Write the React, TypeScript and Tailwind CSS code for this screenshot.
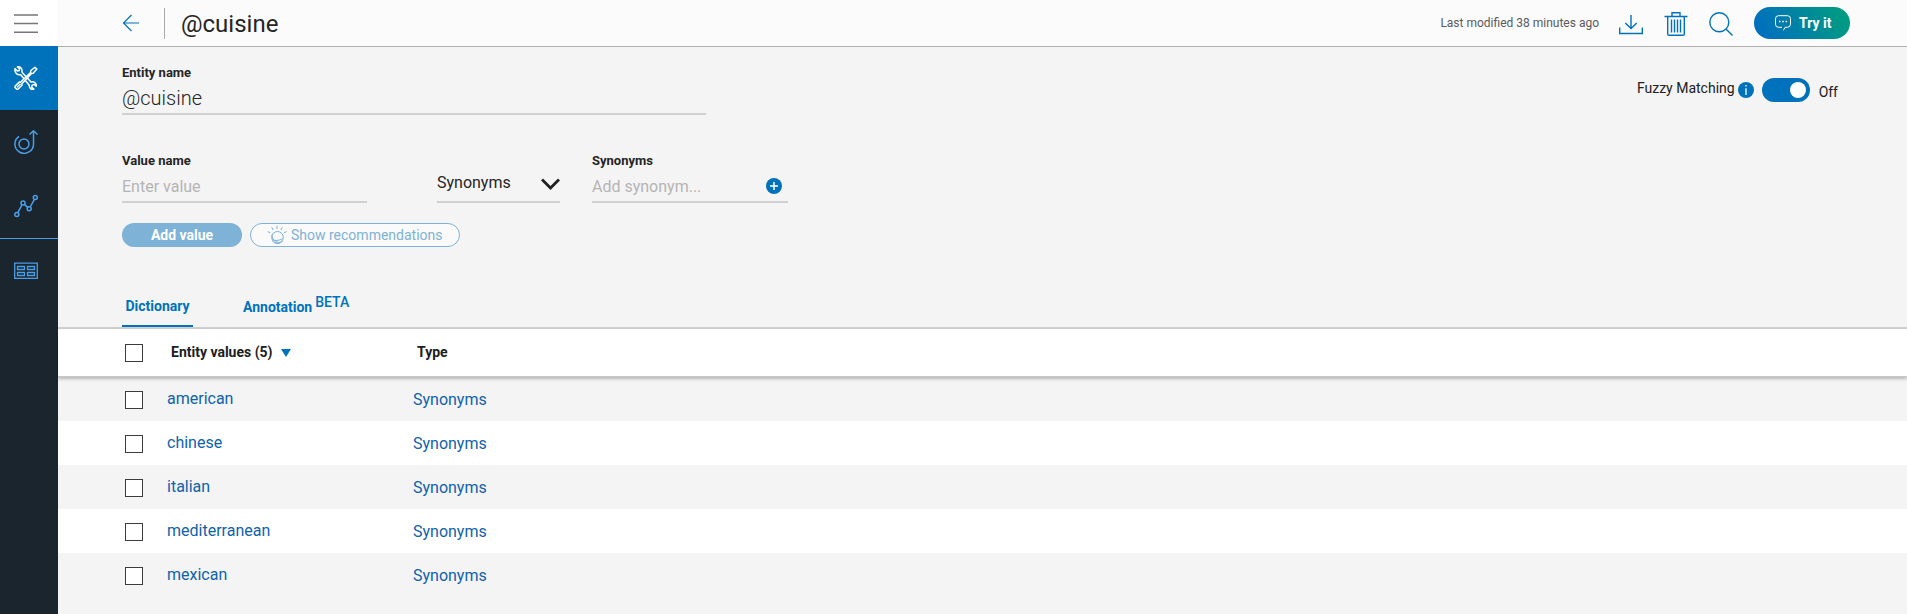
import { useState } from "react";

const entityValues = ["american", "chinese", "italian", "mediterranean", "mexican"];

function ToolsIcon() {
  return (
    <svg className="size-6" viewBox="0 0 24 24" fill="none" stroke="currentColor" strokeWidth="1.5" strokeLinejoin="round">
      <path d="M1 2.6 3.3 5l1.9-.4L5.6 2.6 3.4.9C5.500.3 7.900 1.600 8 4.300v2L17 16c2.800-.8 5.600 1.200 5.300 4.300L20.200 18.500l-2.100.6-.4 2 2.200 2.100c-2.400.8-5-1.200-4.600-4L6.700 8.700C3.300 9.500.300 6.800 1 2.600Z" />
      <path d="m22.800 3-3.600 4.300-1.700.3L7.900 17.700l.2 1.400-3.900 4-1.400.2-1.900-1.900.3-1.400 4-3.900 1.300.2L16.600 6.600l.1-1.800L20.900 1.200Z" fill="#0072bb" />
      <path d="m3 21.200 3.500-3.500" />
    </svg>
  );
}

function IntentIcon() {
  return (
    <svg className="size-6" viewBox="0 0 24 24" fill="none" stroke="currentColor" strokeWidth="1.5">
      <circle cx="10" cy="14" r="5" />
      <path d="M5 6.300A9.300 9.300 0 1 0 19.500 14V1" />
      <path d="m15.500 4.500 4-3.700 4 3.700" />
    </svg>
  );
}

function ChartIcon() {
  return (
    <svg className="size-6" viewBox="0 0 24 24" fill="none" stroke="currentColor" strokeWidth="1.500">
      <circle cx="2.800" cy="20.500" r="2" />
      <circle cx="9" cy="9" r="2" />
      <circle cx="15.200" cy="14.800" r="2" />
      <circle cx="21.300" cy="3.500" r="2" />
      <path d="m3.800 18.700 4.300-8M10.500 10.400l3.200 3M16.200 13l4.200-7.700" />
    </svg>
  );
}

function TableIcon() {
  return (
    <svg className="size-6" viewBox="0 0 24 24" fill="none" stroke="currentColor" strokeWidth="1.300">
      <path d="M.7 4.200h22.600v15.100H.7zM3.500 7.500h7v3h-7zM13.500 7.500h7v3h-7zM3.500 13.500h7v3h-7zM13.500 13.500h7v3h-7z" />
    </svg>
  );
}

function DownloadIcon() {
  return (
    <svg className="size-6" viewBox="0 0 24 24" fill="none" stroke="currentColor" strokeWidth="1.400">
      <path d="M12 3v13.500M6.300 11l5.700 5.500 5.700-5.500M.7 15.500v6h22.600v-6" />
    </svg>
  );
}

function TrashIcon() {
  return (
    <svg className="size-6" viewBox="0 0 24 24" fill="none" stroke="currentColor" strokeWidth="1.400">
      <path d="M.5 4.500h23M8 4.500v-3.700h8v3.700M3.700 4.500v17.500q0 1.300 1.300 1.300h14q1.300 0 1.300-1.300V4.500M7.500 7.500v13M10.500 7.500v13M13.500 7.500v13M16.500 7.500v13" />
    </svg>
  );
}

function SearchIcon() {
  return (
    <svg className="size-6" viewBox="0 0 24 24" fill="none" stroke="currentColor" strokeWidth="1.400">
      <circle cx="10.300" cy="10.300" r="9.500" />
      <path d="m17 17 6.500 6.500" />
    </svg>
  );
}

function ChatIcon() {
  return (
    <svg className="size-4" viewBox="0 0 16 16" fill="none" stroke="currentColor" strokeWidth="1">
      <path d="M8.500 15.300 10 12.300h2.500q3-.3 3-3V3.700q0-3-3-3h-9q-3 0-3 3v5.600q0 3 3 3H7" />
      <path d="M4 6.500h1.500M7.300 6.500h1.500M10.600 6.500h1.500" strokeWidth="1.500" />
    </svg>
  );
}

function WatsonIcon() {
  return (
    <svg className="size-5" viewBox="0 0 20 20" fill="none" stroke="currentColor" strokeWidth="1">
      <circle cx="10.500" cy="12.300" r="5.800" />
      <path d="M5.800 8.600c-1.800 2.400 0 6.600 3.800 8.200 3 1.300 5.500.8 6.200-1" />
      <path d="M5.500 15.500c1.200 2.800 4.800 4 7.800 2.300M5.300 14.500c2 1.600 7.500 1.300 10.300-1" />
      <path d="M10 4V.8M6.200 5 4.700 2.300M13.800 5l1.500-2.700M3.400 8 .6 6.400M16.800 8l2.800-1.600" />
    </svg>
  );
}

const checkboxClass =
  "block size-[18px] appearance-none border border-[#3c3c3c] bg-white checked:bg-[#0072bb]";
const labelClass = "block text-[13px] leading-[18px] font-bold text-[#252525]";
const fieldClass =
  "block w-full border-b-2 border-[#d0d0d0] bg-transparent text-[#252525] outline-none placeholder:text-[#b4b4b4]";

export default function App() {
  const [matching, setMatching] = useState(true);
  return (
    <div className="flex min-h-screen bg-[#f4f4f4] font-[Roboto,'Noto_Sans',sans-serif] text-[#202020]">
      <nav aria-label="Main" className="w-[58px] shrink-0 bg-[#1b252e] text-[#4a9fe8]">
        <button aria-label="Menu" className="flex h-[46px] w-full items-center bg-white pl-3.5 text-[#777]">
          <svg className="size-6" viewBox="0 0 24 24" stroke="currentColor" strokeWidth="1.500">
            <path d="M0 4h24M0 12.500h24M0 21.200h24" />
          </svg>
        </button>
        <a href="#build" aria-label="Build" className="flex h-16 items-center bg-[#0072bb] pl-3.5 text-white">
          <ToolsIcon />
        </a>
        <a href="#improve" aria-label="Improve" className="flex h-16 items-center pl-3.5">
          <IntentIcon />
        </a>
        <a href="#analytics" aria-label="Analytics" className="flex h-16 items-center pl-3.5">
          <ChartIcon />
        </a>
        <a href="#workspaces" aria-label="Workspaces" className="flex h-16 items-center border-t border-[#4a9fe8] pl-3.5">
          <TableIcon />
        </a>
      </nav>

      <div className="min-w-0 flex-1">
        <header className="flex h-[47px] items-center border-b border-[#b0b0b0] bg-[#fbfbfb] pr-[57px] pl-16 text-[#0072bb]">
          <a href="#back" aria-label="Back">
            <svg className="size-[18px]" viewBox="0 0 18 18" fill="none" stroke="currentColor" strokeWidth="1.200">
              <path d="M17 9H1.500M9.500 1 1.500 9l8 8" />
            </svg>
          </a>
          <div className="ml-6 h-[31px] border-l border-[#aaa]" />
          <h1 className="ml-4 pt-0.5 text-2xl text-[#252525]">@cuisine</h1>
          <p className="ml-auto text-xs text-[#5a5a5a]">Last modified 38 minutes ago</p>
          <div className="ml-5 flex items-center gap-[21px] pt-0.5">
            <button aria-label="Download"><DownloadIcon /></button>
            <button aria-label="Delete"><TrashIcon /></button>
            <button aria-label="Search"><SearchIcon /></button>
          </div>
          <button className="ml-[21px] flex h-8 w-24 items-center gap-2 rounded-full bg-linear-[60deg,#0072bb_15%,#009b82_90%] pl-[21px] text-sm font-bold text-white">
            <ChatIcon />
            Try it
          </button>
        </header>

        <main>
          <div className="pt-[17px] pr-[69px] pl-16">
            <div className="flex items-start justify-between">
              <div className="w-[584px]">
                <label htmlFor="entity" className={labelClass}>Entity name</label>
                <input id="entity" defaultValue="@cuisine" className={`${fieldClass} h-[33px] text-xl font-light`} />
              </div>
              <div className="mt-3.5 flex h-6 items-center text-sm">
                <span className="mb-1">Fuzzy Matching</span>
                <button aria-label="About fuzzy matching" className="ml-[3px]">
                  <svg className="size-4" viewBox="0 0 16 16">
                    <circle cx="8" cy="8" r="8" fill="#0072bb" />
                    <path d="M8 3v1.500M8 6.300V13" stroke="white" strokeWidth="1.300" />
                  </svg>
                </button>
                <label className="ml-2 flex items-center">
                  <input
                    type="checkbox"
                    aria-label="Fuzzy matching"
                    checked={matching}
                    onChange={() => setMatching(!matching)}
                    className="flex h-6 w-12 appearance-none items-center justify-start rounded-full bg-[#0072bb] px-1 before:block before:size-4 before:rounded-full before:bg-white checked:justify-end"
                  />
                  <span className="mt-1 ml-[9px]">Off</span>
                </label>
              </div>
            </div>

            <div className="mt-[37px] flex items-end">
              <div className="w-[245px]">
                <label htmlFor="value" className={labelClass}>Value name</label>
                <input id="value" placeholder="Enter value" className={`${fieldClass} h-[33px] pt-0.5 text-base`} />
              </div>
              <div className="relative ml-[70px] w-[123px]">
                <select aria-label="Value type" className={`${fieldClass} h-[42px] appearance-none pt-1 text-base`}>
                  <option>Synonyms</option>
                  <option>Patterns</option>
                </select>
                <svg className="pointer-events-none absolute top-[17px] right-0 h-3 w-[19px]" viewBox="0 0 19 12" fill="none" stroke="#202020" strokeWidth="2.800">
                  <path d="m1 1.500 8.500 8.500L18 1.500" />
                </svg>
              </div>
              <div className="relative ml-8 w-[196px]">
                <label htmlFor="synonym" className={labelClass}>Synonyms</label>
                <input id="synonym" placeholder="Add synonym..." className={`${fieldClass} h-[33px] pt-0.5 pr-8 text-base`} />
                <button aria-label="Add synonym" className="absolute right-1.5 bottom-[9px]">
                  <svg className="size-4" viewBox="0 0 16 16">
                    <circle cx="8" cy="8" r="8" fill="#0072bb" />
                    <path d="M8 4v8M4 8h8" stroke="white" strokeWidth="1.500" />
                  </svg>
                </button>
              </div>
            </div>

            <div className="mt-5 flex gap-2">
              <button className="h-6 w-[120px] rounded-full bg-[#7eb2d7] text-sm leading-6 font-bold text-white">Add value</button>
              <button className="flex h-6 w-[210px] items-center gap-1 rounded-full border border-[#7eb2d7] bg-[#fafafa] pl-4 text-sm whitespace-nowrap text-[#7eb2d7]">
                <WatsonIcon />
                Show recommendations
              </button>
            </div>
          </div>

          <div role="tablist" className="mt-11 flex h-[38px] items-stretch gap-[50px] border-b-2 border-[#cfcfcf] pl-16 text-sm font-bold text-[#0072bb]">
            <button role="tab" aria-selected="true" className="w-[71px] border-b-2 border-[#0072bb] pb-1">Dictionary</button>
            <button role="tab" aria-selected="false" className="flex items-center gap-[3px] pb-1">
              Annotation
              <span className="mb-2.5 font-medium">BETA</span>
            </button>
          </div>

          <table className="w-full table-fixed border-separate border-spacing-0 text-left">
            <colgroup>
              <col className="w-[109px]" />
              <col className="w-[246px]" />
              <col />
            </colgroup>
            <thead className="relative z-10 shadow-[0_2px_3px_rgba(0,0,0,0.25)]">
              <tr className="h-12 bg-white text-sm">
                <th className="border-b border-[#c8c8c8] pl-[67px]">
                  <input type="checkbox" aria-label="Select all values" className={checkboxClass} />
                </th>
                <th aria-sort="descending" className="border-b border-[#c8c8c8] pb-0.5 pl-1">
                  <button className="flex items-center gap-2 font-bold">
                    Entity values (5)
                    <svg className="mt-0.5 h-2 w-2.5" viewBox="0 0 10 8" fill="#0072bb"><path d="M0 0h10L5 8z" /></svg>
                  </button>
                </th>
                <th className="border-b border-[#c8c8c8] pb-0.5 pl-1 font-bold">Type</th>
              </tr>
            </thead>
            <tbody className="text-base text-[#0f62ac]">
              {entityValues.map((value) => (
                <tr key={value} className="h-11 even:bg-white">
                  <td className="pt-0.5 pl-[67px]">
                    <input type="checkbox" aria-label={`Select ${value}`} className={checkboxClass} />
                  </td>
                  <td><a href={`#${value}`}>{value}</a></td>
                  <td className="pt-0.5"><a href={`#${value}`}>Synonyms</a></td>
                </tr>
              ))}
            </tbody>
          </table>
        </main>
      </div>
    </div>
  );
}
